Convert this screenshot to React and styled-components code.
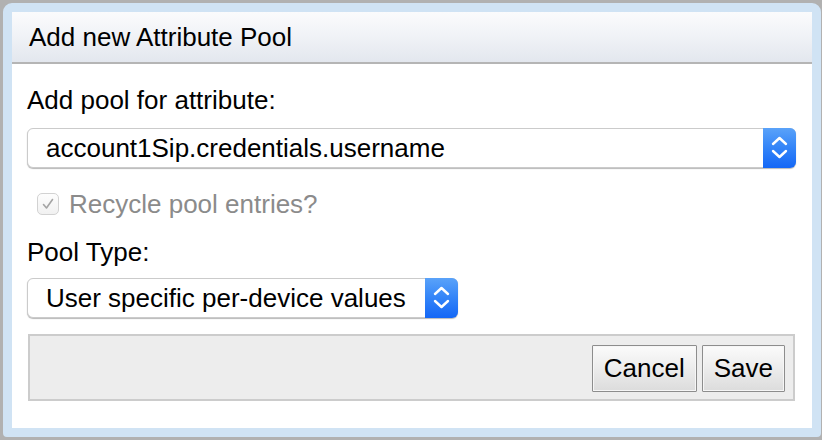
import React from 'react';
import styled, { createGlobalStyle } from 'styled-components';

const GlobalStyle = createGlobalStyle`
  html, body {
    margin: 0;
    padding: 0;
    background: #b1b1b1;
  }
  body {
    font-family: "Liberation Sans", Arial, Helvetica, sans-serif;
    color: #000;
  }
`;

const Frame = styled.div`
  box-sizing: border-box;
  width: 818px;
  height: 434px;
  margin: 3px 0 0 3px;
  border: 9px solid #d0e3f4;
  border-radius: 9px 9px 4px 4px;
  background: #ffffff;
  display: flex;
  flex-direction: column;
  overflow: hidden;
`;

const TitleBar = styled.div`
  height: 50px;
  flex: 0 0 50px;
  display: flex;
  align-items: center;
  padding-left: 17px;
  font-size: 26px;
  background: linear-gradient(to bottom, #fbfbfc 0%, #f1f3f7 45%, #e3e7ee 100%);
  border-bottom: 2px solid #b5b5b5;
`;

const Body = styled.div`
  flex: 1;
  display: flex;
  flex-direction: column;
  padding: 21px 16px 0 15px;
`;

const Label = styled.div`
  font-size: 26px;
  line-height: 30px;
  margin-top: ${p => p.$top || 0}px;
`;

const SelectBox = styled.div`
  box-sizing: border-box;
  width: ${p => p.$width}px;
  height: 40px;
  margin-top: ${p => p.$top || 0}px;
  display: flex;
  align-items: stretch;
  border: 1px solid #cbcbcb;
  border-radius: 6px;
  background: #fff;
  box-shadow: 0 1px 1px rgba(0, 0, 0, 0.28);
`;

const SelectValue = styled.div`
  flex: 1;
  display: flex;
  align-items: center;
  padding-left: 18px;
  font-size: 26px;
  white-space: nowrap;
  overflow: hidden;
`;

const Stepper = styled.div`
  flex: 0 0 33px;
  margin: -1px -1px -1px 0;
  border-radius: 0 6px 6px 0;
  background: linear-gradient(to bottom, #5aa2f9 0%, #3384f8 50%, #1467f6 100%);
  display: flex;
  align-items: center;
  justify-content: center;
`;

const CheckRow = styled.label`
  display: flex;
  align-items: center;
  gap: 10px;
  margin-top: 21px;
  padding-left: 10px;
  height: 30px;
  font-size: 26px;
  color: #8b8b8b;
`;

const CheckBox = styled.span`
  box-sizing: border-box;
  width: 22px;
  height: 22px;
  border: 1px solid #d2d2d2;
  border-radius: 5px;
  background: linear-gradient(to bottom, #fdfdfd, #f1f1f1);
  display: flex;
  align-items: center;
  justify-content: center;
`;

const ButtonBar = styled.div`
  box-sizing: border-box;
  margin: 16px 1px 0 1px;
  height: 67px;
  border: 2px solid #cccccc;
  background: #ededed;
  display: flex;
  justify-content: flex-end;
  align-items: flex-start;
  gap: 5px;
  padding: 9px 8px 0 0;
`;

const Button = styled.button`
  box-sizing: border-box;
  height: 47px;
  padding: 0 11px;
  font-family: inherit;
  font-size: 26px;
  color: #000;
  border: 1px solid #8d8d8d;
  border-radius: 1px;
  background: linear-gradient(to bottom, #fbfbfb 0%, #ececec 50%, #dcdcdc 100%);
  box-shadow: inset 0 0 0 1px #f6f6f6;
  cursor: pointer;
`;

const Chevrons = () => (
  <svg width="33" height="40" viewBox="0 0 33 40">
    <g fill="none" stroke="#ffffff" strokeWidth="2.4" strokeLinecap="round" strokeLinejoin="round">
      <polyline points="10,16 16.5,10 23,16" />
      <polyline points="10,23 16.5,29 23,23" />
    </g>
  </svg>
);

const Select = ({ value, width, top }) => (
  <SelectBox $width={width} $top={top}>
    <SelectValue>{value}</SelectValue>
    <Stepper>
      <Chevrons />
    </Stepper>
  </SelectBox>
);

const App = () => {
  return (
    <>
      <GlobalStyle />
      <Frame>
        <TitleBar>Add new Attribute Pool</TitleBar>
        <Body>
          <Label>Add pool for attribute:</Label>
          <Select value="account1Sip.credentials.username" width={769} top={13} />
          <CheckRow>
            <CheckBox>
              <svg width="14" height="14" viewBox="0 0 14 14">
                <polyline points="2.5,7.5 5.5,11 11.5,2.5" fill="none" stroke="#a4a4a4" strokeWidth="1.6" strokeLinecap="round" strokeLinejoin="round" />
              </svg>
            </CheckBox>
            Recycle pool entries?
          </CheckRow>
          <Label $top={18}>Pool Type:</Label>
          <Select value="User specific per-device values" width={431} top={11} />
          <ButtonBar>
            <Button>Cancel</Button>
            <Button>Save</Button>
          </ButtonBar>
        </Body>
      </Frame>
    </>
  );
};

export default App;
